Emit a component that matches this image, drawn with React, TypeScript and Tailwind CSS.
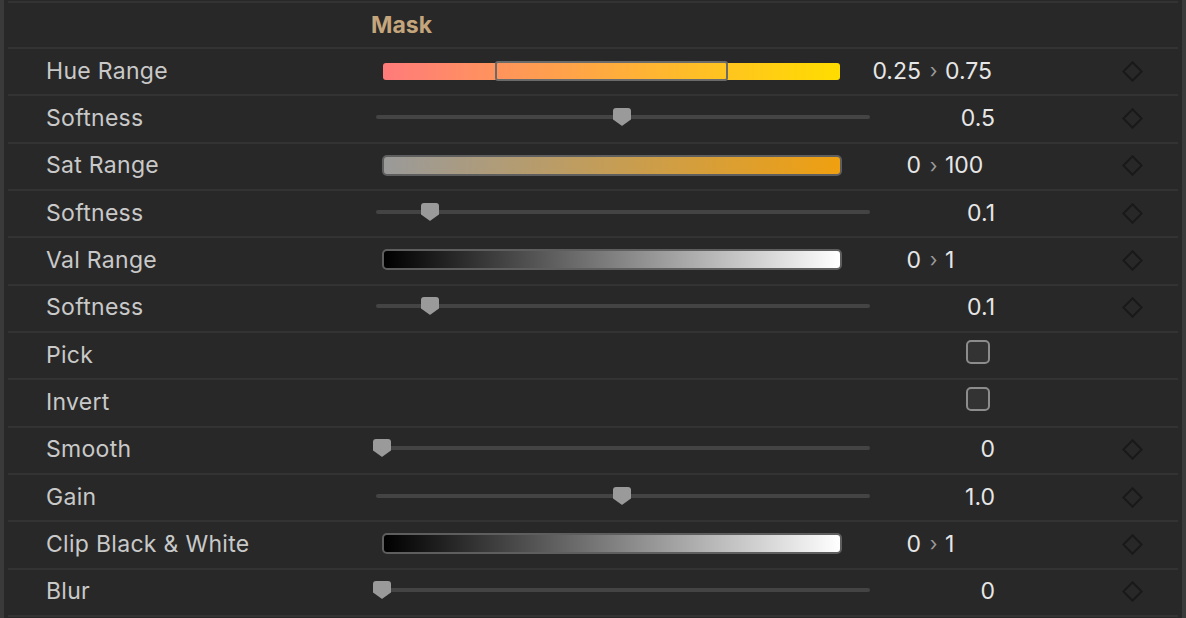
import React from "react";

const FONT = { fontFamily: "Inter, 'Noto Sans', 'Liberation Sans', sans-serif" };

type Row =
  | { kind: "slider"; label: string; v: number; text: string }
  | { kind: "range"; label: string; bar: "hue" | "sat" | "val"; a: string; b: string }
  | { kind: "check"; label: string };

const rows: Row[] = [
  { kind: "range", label: "Hue Range", bar: "hue", a: "0.25", b: "0.75" },
  { kind: "slider", label: "Softness", v: 0.5, text: "0.5" },
  { kind: "range", label: "Sat Range", bar: "sat", a: "0", b: "100" },
  { kind: "slider", label: "Softness", v: 0.1, text: "0.1" },
  { kind: "range", label: "Val Range", bar: "val", a: "0", b: "1" },
  { kind: "slider", label: "Softness", v: 0.1, text: "0.1" },
  { kind: "check", label: "Pick" },
  { kind: "check", label: "Invert" },
  { kind: "slider", label: "Smooth", v: 0, text: "0" },
  { kind: "slider", label: "Gain", v: 0.5, text: "1.0" },
  { kind: "range", label: "Clip Black & White", bar: "val", a: "0", b: "1" },
  { kind: "slider", label: "Blur", v: 0, text: "0" },
];

function Diamond() {
  return (
    <svg width="21" height="21" viewBox="0 0 21 21" className="ml-[126px] shrink-0 mb-[1px]">
      <path d="M10.5 1.3 L19.7 10.5 L10.5 19.7 L1.3 10.5 Z" fill="none" stroke="#191919" strokeWidth="2" />
    </svg>
  );
}

function Thumb() {
  return (
    <svg width="18" height="18" viewBox="0 0 18 18">
      <path d="M3 0 H15 Q18 0 18 3 V11.5 L9.6 17.6 Q9 18 8.4 17.6 L0 11.5 V3 Q0 0 3 0 Z" fill="#9a9a9a" />
    </svg>
  );
}

function Slider({ v }: { v: number }) {
  return (
    <div className="relative w-[494px] h-[4px] mb-[4px] rounded-full bg-[#444444]">
      <div className="absolute top-[-7px] -translate-x-1/2" style={{ left: `${6 + v * 480}px` }}>
        <Thumb />
      </div>
    </div>
  );
}

function RangeBar({ bar }: { bar: "hue" | "sat" | "val" }) {
  if (bar === "hue") {
    return (
      <div className="relative ml-[7px] w-[457px] h-[20px] mb-[1px]">
        <div className="absolute inset-x-0 top-[1.5px] bottom-[1.5px] rounded-[3px] bg-[linear-gradient(to_right,#ff7b7b,#ffdd00)]" />
        <div className="absolute top-0 bottom-0 left-[112px] w-[233px] rounded-[3px] border-2 border-[#6a6a6a]" />
      </div>
    );
  }
  const grad =
    bar === "sat"
      ? "bg-[linear-gradient(to_right,#9a9a9a,#f0a010)]"
      : "bg-[linear-gradient(to_right,#000000,#ffffff)]";
  return (
    <div className={`ml-[6px] mb-[2px] w-[460px] h-[21px] rounded-[5px] border-2 border-[#5e5e5e] ${grad}`} />
  );
}

function RowView({ row }: { row: Row }) {
  return (
    <div className="flex items-center h-[47.33px] border-t-2 border-[#333333]">
      <div className="w-[368px] pl-[38px] text-[23px] tracking-[0.3px] text-[#c9c9c9] shrink-0 leading-none mb-[1px]">
        {row.label}
      </div>
      <div className="w-[494px] shrink-0 flex items-center">
        {row.kind === "slider" && <Slider v={row.v} />}
        {row.kind === "range" && <RangeBar bar={row.bar} />}
      </div>
      <div className="w-[126px] shrink-0 flex items-center text-[23px] text-[#e6e6e6] leading-none mb-[1px]">
        {row.kind === "slider" && <div className="w-full text-right pr-[1px]">{row.text}</div>}
        {row.kind === "range" && (
          <div className="flex items-center w-full">
            <div className="w-[51px] text-right">{row.a}</div>
            <div className="w-[24px] text-center text-[#9a9a9a] text-[20px] pl-[1px]">›</div>
            <div className="text-left">{row.b}</div>
          </div>
        )}
        {row.kind === "check" && (
          <div className="ml-auto mr-[6px] mb-[6px] w-[24px] h-[24px] rounded-[5px] border-2 border-[#8c8c8c] bg-[#333333]" />
        )}
      </div>
      {row.kind !== "check" && <Diamond />}
    </div>
  );
}

export default function App() {
  return (
    <div className="w-[1186px] h-[618px] bg-[#282828] flex overflow-hidden" style={FONT}>
      <div className="w-[4px] bg-[#3a3a3a] shrink-0" />
      <div className="ml-[4px] w-[1170px] shrink-0 pt-[1px] flex flex-col">
        <div className="h-[2px] bg-[#333333]" />
        <div className="h-[44px] flex items-center pl-[363px] text-[23px] font-bold text-[#c4a57c] leading-none">
          Mask
        </div>
        {rows.map((r, i) => (
          <RowView key={i} row={r} />
        ))}
        <div className="h-[2px] bg-[#333333]" />
      </div>
      <div className="ml-[4px] w-[4px] bg-[#3a3a3a] shrink-0" />
    </div>
  );
}
